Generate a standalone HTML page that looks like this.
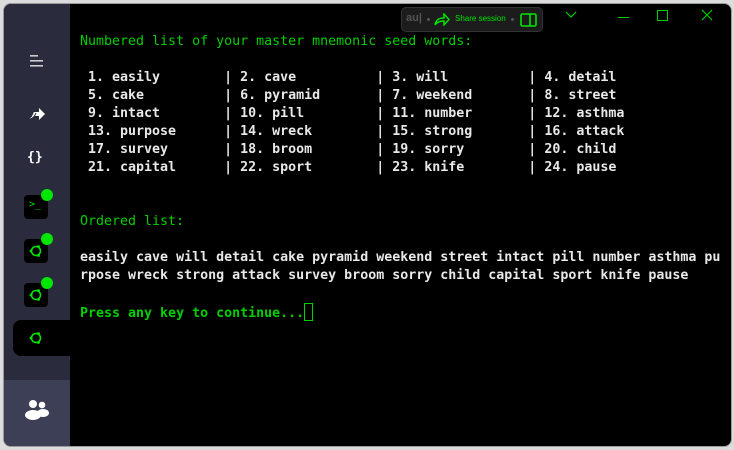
<!DOCTYPE html>
<html><head><meta charset="utf-8"><style>
html,body{margin:0;padding:0;width:734px;height:450px;overflow:hidden;background:#dcdcdc}
#win{position:absolute;left:3px;top:3px;width:729px;height:444px;background:#000;border-radius:8px;overflow:hidden;border:1px solid #9a9a9a;box-sizing:border-box}
#side{position:absolute;left:0;top:0;width:66px;height:100%;background:#2a2c3d}
#bot{position:absolute;left:0;top:376px;width:66px;height:70px;background:#3c3f55}
.box{position:absolute;left:20px;width:24px;height:24px;background:#000;border-radius:4px}
.dot{position:absolute;width:12px;height:12px;border-radius:50%;background:#00e600}
#tab{position:absolute;left:9px;top:316px;width:60px;height:36px;background:#000;border-radius:8px 0 0 8px}
#term{position:absolute;left:76px;top:29px;font-family:"DejaVu Sans Mono","Liberation Mono",monospace;font-size:13.3px;line-height:18px;color:#e8e8e8;white-space:pre;font-weight:bold}
.g{color:#00d000;font-weight:normal}
.gb{color:#00d000}
#tb{position:absolute;left:397px;top:3px;width:142px;height:25px;background:#1c1c1c;border:1px solid #333;border-radius:5px;box-sizing:border-box}
</style></head><body>
<div id="win">
<div id="side">
 <svg style="position:absolute;left:26px;top:51px" width="14" height="12"><rect x="0" y="0" width="8" height="1.6" fill="#ccc"/><rect x="0" y="5" width="13" height="1.6" fill="#ccc"/><rect x="0" y="10" width="13" height="1.6" fill="#ccc"/></svg>
 <svg style="position:absolute;left:26px;top:104px" width="16" height="12"><path d="M0 11 L4 4 L9 4 L9 0 L15 6 L9 12 L9 8 L4 8 Z" fill="#fff"/><path d="M3 5 L1 9 M6 5 L4 9" stroke="#2a2c3d" stroke-width="1"/></svg>
 <div style="position:absolute;left:23px;top:146px;color:#fff;font:bold 13px 'DejaVu Sans Mono',monospace">{}</div>
 <div class="box" style="top:191px"><div style="position:absolute;left:5px;top:4px;color:#00e600;font:10px 'DejaVu Sans Mono',monospace">&gt;_</div></div>
 <div class="dot" style="left:37px;top:185px"></div>
 <div class="box" style="top:235px"><svg width="24" height="24"><circle cx="12" cy="12" r="4.5" fill="none" stroke="#00e600" stroke-width="1.6"/><circle cx="7" cy="12" r="1.4" fill="#00e600"/><circle cx="14.5" cy="7.5" r="1.4" fill="#00e600"/><circle cx="14.5" cy="16.5" r="1.4" fill="#00e600"/></svg></div>
 <div class="dot" style="left:37px;top:229px"></div>
 <div class="box" style="top:279px"><svg width="24" height="24"><circle cx="12" cy="12" r="4.5" fill="none" stroke="#00e600" stroke-width="1.6"/><circle cx="7" cy="12" r="1.4" fill="#00e600"/><circle cx="14.5" cy="7.5" r="1.4" fill="#00e600"/><circle cx="14.5" cy="16.5" r="1.4" fill="#00e600"/></svg></div>
 <div class="dot" style="left:37px;top:273px"></div>
 <div id="bot"><svg style="position:absolute;left:21px;top:19px" width="26" height="22"><circle cx="8" cy="5" r="4" fill="#fff"/><circle cx="17" cy="6" r="3.3" fill="#fff"/><ellipse cx="8" cy="16" rx="8" ry="5" fill="#fff"/><ellipse cx="18" cy="14" rx="6" ry="4" fill="#fff"/></svg></div>
</div>
<div id="tab"><svg style="position:absolute;left:11px;top:6px" width="24" height="24"><circle cx="12" cy="12" r="4.5" fill="none" stroke="#00e600" stroke-width="1.6"/><circle cx="7" cy="12" r="1.4" fill="#00e600"/><circle cx="14.5" cy="7.5" r="1.4" fill="#00e600"/><circle cx="14.5" cy="16.5" r="1.4" fill="#00e600"/></svg></div>
<div id="term"><span class="g">Numbered list of your master mnemonic seed words:</span>

 1. easily        | 2. cave          | 3. will          | 4. detail
 5. cake          | 6. pyramid       | 7. weekend       | 8. street
 9. intact        | 10. pill         | 11. number       | 12. asthma
 13. purpose      | 14. wreck        | 15. strong       | 16. attack
 17. survey       | 18. broom        | 19. sorry        | 20. child
 21. capital      | 22. sport        | 23. knife        | 24. pause


<span class="g">Ordered list:</span>

easily cave will detail cake pyramid weekend street intact pill number asthma pu
rpose wreck strong attack survey broom sorry child capital sport knife pause

<span class="gb">Press any key to continue...</span><span style="display:inline-block;width:7px;height:16px;border:1px solid #00d000;vertical-align:-4px"></span></div>
<div id="tb">
 <span style="position:absolute;left:4px;top:4px;color:#555;font:bold 11px 'Liberation Sans',sans-serif">au|</span>
 <span style="position:absolute;left:25px;top:10px;width:3px;height:3px;border-radius:50%;background:#555"></span>
 <svg style="position:absolute;left:32px;top:5px" width="16" height="13"><path d="M1 12 C2 6 6 5 10 5 L10 1 L15 6.5 L10 12 L10 8 C6 8 3 9 1 12 Z" fill="none" stroke="#00e600" stroke-width="1.4"/></svg>
 <span style="position:absolute;left:53px;top:6px;color:#00e600;font:8px 'Liberation Sans',sans-serif">Share session</span>
 <span style="position:absolute;left:109px;top:10px;width:3px;height:3px;border-radius:50%;background:#555"></span>
 <svg style="position:absolute;left:118px;top:5px" width="17" height="14"><rect x="1" y="1" width="15" height="12" rx="1.5" fill="none" stroke="#00e600" stroke-width="1.6"/><line x1="10" y1="1" x2="10" y2="13" stroke="#00e600" stroke-width="1.6"/></svg>
</div>
<svg style="position:absolute;left:561px;top:7px" width="12" height="8"><path d="M1 1 L6 6 L11 1" fill="none" stroke="#00d000" stroke-width="1.2"/></svg>
<div style="position:absolute;left:614px;top:13px;width:11px;height:1.3px;background:#00d000"></div>
<div style="position:absolute;left:653px;top:6px;width:9px;height:9px;border:1.2px solid #00d000"></div>
<svg style="position:absolute;left:697px;top:5px" width="12" height="12"><path d="M1 1 L11 11 M11 1 L1 11" stroke="#00d000" stroke-width="1.2"/></svg>
</div>
</body></html>
